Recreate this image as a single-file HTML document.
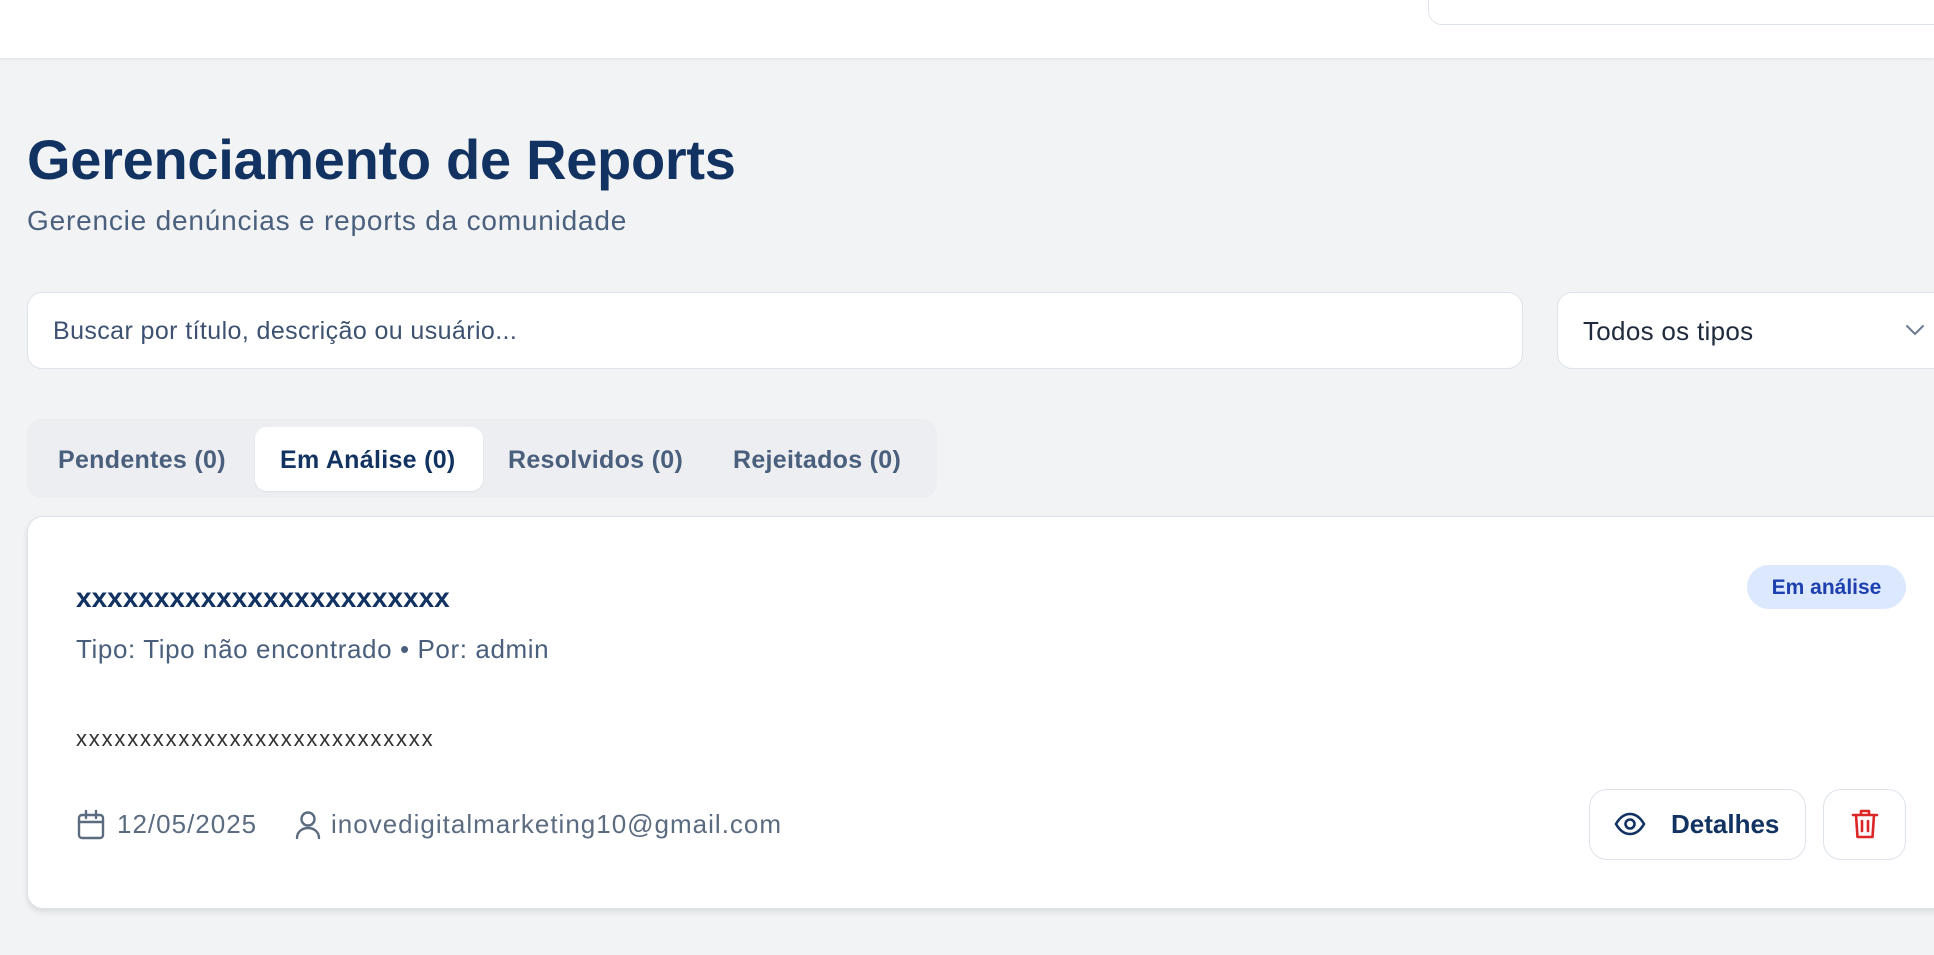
<!DOCTYPE html>
<html><head><meta charset="utf-8"><style>
*{box-sizing:border-box;margin:0;padding:0}
body{width:1934px;height:955px;overflow:hidden;background:#f2f3f5;font-family:"Liberation Sans",sans-serif;position:relative}
.hdr{position:absolute;left:0;top:0;width:1934px;height:58px;background:#fff;box-shadow:0 1px 3px rgba(0,0,0,.08)}
.topsearch{position:absolute;left:1428px;top:-20px;width:540px;height:45px;border:1px solid #dde3ea;border-radius:14px;background:#fff}
h1{position:absolute;left:27px;top:127px;font-size:56px;font-weight:700;color:#123361;letter-spacing:-0.3px}
.sub{position:absolute;left:27px;top:205px;font-size:28px;color:#4a607d;letter-spacing:0.8px}
.search{position:absolute;left:27px;top:292px;width:1496px;height:77px;background:#fff;border:1.5px solid #dde3ea;border-radius:15px;padding-left:25px;line-height:76px;font-size:25px;color:#3d5170;letter-spacing:0.4px}
.sel{position:absolute;left:1557px;top:292px;width:420px;height:77px;background:#fff;border:1.5px solid #dde3ea;border-radius:15px;padding-left:25px;line-height:76px;font-size:26px;color:#1f2a3c;letter-spacing:0.3px}
.chev{position:absolute;left:1904px;top:322px}
.tabs{position:absolute;left:27px;top:419px;width:910px;height:79px;background:#eceef2;border-radius:15px}
.tab{position:absolute;top:427px;height:64px;line-height:66px;font-size:25px;font-weight:700;color:#4a5f7c;letter-spacing:0.3px}
.tabact{position:absolute;left:255px;top:427px;width:228px;height:64px;background:#fff;border-radius:12px;box-shadow:0 1px 2px rgba(0,0,0,.06)}
.card{position:absolute;left:27px;top:516px;width:1960px;height:393px;background:#fff;border:1.5px solid #dde3ea;border-radius:16px;box-shadow:0 3px 6px rgba(0,0,0,.1)}
.t{position:absolute;left:76px;top:582px;font-size:28px;font-weight:700;color:#123361;letter-spacing:0px}
.badge{position:absolute;left:1747px;top:565px;width:159px;height:44px;border-radius:22px;background:#dbe8fd;color:#1e40af;font-size:21px;font-weight:700;text-align:center;line-height:46px}
.tipo{position:absolute;left:76px;top:634px;font-size:26px;color:#4a5f7c;letter-spacing:0.6px}
.desc{position:absolute;left:76px;top:726px;font-size:22px;color:#333;letter-spacing:1.8px}
.foot{position:absolute;top:809px;font-size:26px;color:#5b6b80;letter-spacing:1px}
.btn{position:absolute;top:789px;height:71px;border:1.5px solid #dde3ea;border-radius:18px;background:#fff}
</style></head><body>
<div class="hdr"><div class="topsearch"></div></div>
<h1>Gerenciamento de Reports</h1>
<div class="sub">Gerencie denúncias e reports da comunidade</div>
<div class="search">Buscar por título, descrição ou usuário...</div>
<div class="sel">Todos os tipos</div>
<svg class="chev" width="22" height="16" viewBox="0 0 22 16"><path d="M3 4l8 8 8-8" fill="none" stroke="#6b7a90" stroke-width="2" stroke-linecap="round"/></svg>
<div class="tabs"></div>
<div class="tabact"></div>
<div class="tab" style="left:58px">Pendentes (0)</div>
<div class="tab" style="left:280px;color:#123361">Em Análise (0)</div>
<div class="tab" style="left:508px">Resolvidos (0)</div>
<div class="tab" style="left:733px">Rejeitados (0)</div>
<div class="card"></div>
<div class="t">xxxxxxxxxxxxxxxxxxxxxxxx</div>
<div class="badge">Em análise</div>
<div class="tipo">Tipo: Tipo não encontrado • Por: admin</div>
<div class="desc">xxxxxxxxxxxxxxxxxxxxxxxxxxxx</div>
<svg style="position:absolute;left:76px;top:809px" width="30" height="32" viewBox="0 0 30 32"><rect x="3" y="6" width="24" height="23" rx="3" fill="none" stroke="#5b6b80" stroke-width="2.4"/><path d="M3 13h24M10 2v7M20 2v7" stroke="#5b6b80" stroke-width="2.4" stroke-linecap="round"/></svg>
<div class="foot" style="left:117px">12/05/2025</div>
<svg style="position:absolute;left:294px;top:809px" width="28" height="32" viewBox="0 0 28 32"><circle cx="14" cy="10" r="6.5" fill="none" stroke="#5b6b80" stroke-width="2.4"/><path d="M3 29c0-6 5-10 11-10s11 4 11 10" fill="none" stroke="#5b6b80" stroke-width="2.4" stroke-linecap="round"/></svg>
<div class="foot" style="left:331px">inovedigitalmarketing10@gmail.com</div>
<div class="btn" style="left:1589px;width:217px"></div>
<svg style="position:absolute;left:1614px;top:812px" width="32" height="24" viewBox="0 0 32 24"><path d="M2 12C6 5 11 2 16 2s10 3 14 10c-4 7-9 10-14 10S6 19 2 12z" fill="none" stroke="#123361" stroke-width="2.6"/><circle cx="16" cy="12" r="4.5" fill="none" stroke="#123361" stroke-width="2.6"/></svg>
<div style="position:absolute;left:1671px;top:809px;font-size:26px;font-weight:700;color:#123361">Detalhes</div>
<div class="btn" style="left:1823px;width:83px"></div>
<svg style="position:absolute;left:1851px;top:808px" width="28" height="32" viewBox="0 0 28 32"><path d="M2 7h24M10 7V3h8v4M5 7l1.5 22h15L23 7M11 13v10M17 13v10" fill="none" stroke="#dc2626" stroke-width="2.6" stroke-linecap="round" stroke-linejoin="round"/></svg>
</body></html>
